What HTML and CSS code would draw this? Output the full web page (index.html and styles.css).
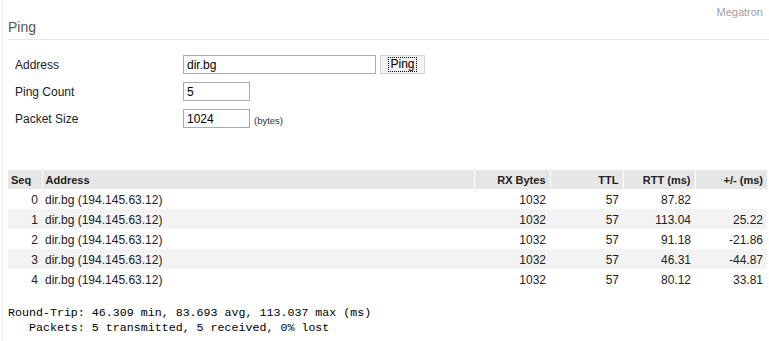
FILE: index.html
```html
<!DOCTYPE html>
<html lang="en">
<head>
    <meta charset="UTF-8">
    <title>Ping</title>
    <link rel="stylesheet" href="styles.css">
</head>
<body>
<div class="page">
    <div class="topbar">Megatron</div>
    <h1 class="title">Ping</h1>

    <form class="pingForm">
        <label class="names" for="address">Address</label>
        <div class="field">
            <input type="text" id="address" class="wide" value="dir.bg">
            <button type="submit" class="btn"><span>Ping</span></button>
        </div>
        <label class="names" for="count">Ping Count</label>
        <div class="field">
            <input type="text" id="count" class="short" value="5">
        </div>
        <label class="names" for="size">Packet Size</label>
        <div class="field">
            <input type="text" id="size" class="short" value="1024">
            <span class="unit">(bytes)</span>
        </div>
    </form>

    <table class="results">
        <thead>
            <tr>
                <th class="seq">Seq</th>
                <th class="addr">Address</th>
                <th class="num rx">RX Bytes</th>
                <th class="num ttl">TTL</th>
                <th class="num rtt">RTT (ms)</th>
                <th class="num diff">+/- (ms)</th>
            </tr>
        </thead>
        <tbody>
            <tr><td class="num">0</td><td>dir.bg (194.145.63.12)</td><td class="num">1032</td><td class="num">57</td><td class="num">87.82</td><td class="num"></td></tr>
            <tr><td class="num">1</td><td>dir.bg (194.145.63.12)</td><td class="num">1032</td><td class="num">57</td><td class="num">113.04</td><td class="num">25.22</td></tr>
            <tr><td class="num">2</td><td>dir.bg (194.145.63.12)</td><td class="num">1032</td><td class="num">57</td><td class="num">91.18</td><td class="num">-21.86</td></tr>
            <tr><td class="num">3</td><td>dir.bg (194.145.63.12)</td><td class="num">1032</td><td class="num">57</td><td class="num">46.31</td><td class="num">-44.87</td></tr>
            <tr><td class="num">4</td><td>dir.bg (194.145.63.12)</td><td class="num">1032</td><td class="num">57</td><td class="num">80.12</td><td class="num">33.81</td></tr>
        </tbody>
    </table>

<pre class="summary">Round-Trip: 46.309 min, 83.693 avg, 113.037 max (ms)
   Packets: 5 transmitted, 5 received, 0% lost</pre>
</div>
</body>
</html>
```

FILE: styles.css
```css
/* Reset */
* {
  box-sizing: border-box;
  margin: 0;
  padding: 0;
}

body {
  font-family: 'Liberation Sans', Arial, sans-serif;
  font-size: 12px;
  color: #222;
  background: #fff;
}

/* Page frame */
.page {
  margin-left: 2px;
  border-left: 1px solid #ececec;
  padding-left: 5px;
  padding-right: 1px;
  min-height: 341px;
}

.topbar {
  height: 19px;
  padding-top: 5px;
  padding-right: 5px;
  text-align: right;
  font-size: 11px;
  line-height: 14px;
  color: #a0a0a0;
}

.title {
  font-size: 14px;
  font-weight: normal;
  line-height: 16px;
  color: #555;
  padding-bottom: 4px;
  border-bottom: 1px solid #e6e6e6;
  margin-right: -2px;
}

/* Form */
.pingForm {
  display: grid;
  grid-template-columns: 168px auto;
  grid-auto-rows: 19px;
  row-gap: 8px;
  padding: 15px 0 0 7px;
}

.pingForm .names {
  height: 19px;
  line-height: 19px;
  padding-top: 1px;
  color: #222;
}

.field {
  display: flex;
  align-items: center;
  gap: 4px;
}

.field input {
  height: 19px;
  border: 1px solid #a5acb2;
  padding: 1px 3px 0;
  font-family: 'Liberation Sans', Arial, sans-serif;
  font-size: 12px;
  color: #000;
}

.field input.wide {
  width: 193px;
}

.field input.short {
  width: 67px;
}

.btn {
  height: 19px;
  width: 45px;
  border: 1px solid #d4d4d4;
  background: #f3f3f3;
  font-family: 'Liberation Sans', Arial, sans-serif;
  font-size: 12px;
  color: #000;
  display: flex;
  align-items: center;
  justify-content: center;
}

.btn span {
  border: 1px dotted #000;
  padding: 0 1px;
  line-height: 13px;
}

.unit {
  font-size: 9.5px;
  color: #333;
  margin-top: 4px;
}

/* Results table */
.results {
  margin-top: 42px;
  width: 759px;
  border-collapse: collapse;
  table-layout: fixed;
}

.results th {
  height: 19px;
  background: #e6e6e6;
  border-right: 1px solid #fff;
  font-size: 11px;
  font-weight: bold;
  color: #222;
  text-align: left;
  padding: 0 4px 0 3px;
}

.results th:last-child {
  border-right: none;
}

.results td {
  height: 20px;
  padding: 1px 4px 0 3px;
  color: #222;
  white-space: nowrap;
}

.results .num {
  text-align: right;
}

.results tbody tr:nth-child(even) td {
  background: #f3f3f3;
}

.results .seq { width: 34px; }
.results .addr { width: 432px; }
.results .rx { width: 76px; }
.results .ttl { width: 73px; }
.results .rtt { width: 72px; }
.results .diff { width: 72px; }

/* Summary */
.summary {
  margin-top: 16px;
  font-family: 'Liberation Mono', 'Courier New', monospace;
  font-size: 11.65px;
  line-height: 15px;
  color: #000;
}
```
